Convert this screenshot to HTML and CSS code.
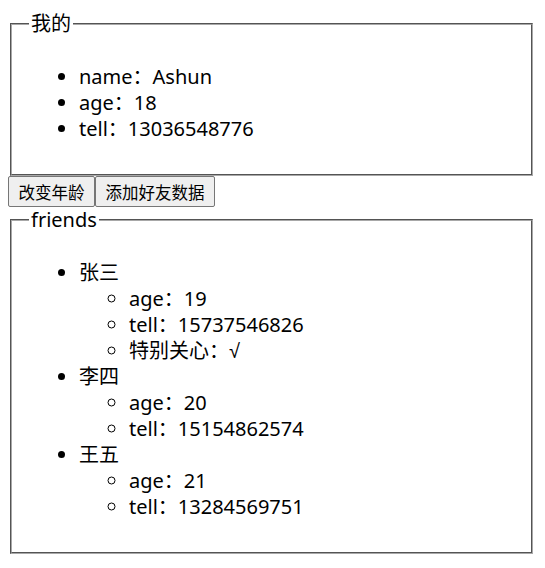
FILE: index.html
```html
<!DOCTYPE html>
<html>
<head>
<meta charset="utf-8">
<link rel="stylesheet" href="styles.css">
</head>
<body>
<fieldset class="box box-me">
  <legend class="box-title">我的</legend>
  <ul class="list">
    <li>name：Ashun</li>
    <li>age：18</li>
    <li>tell：13036548776</li>
  </ul>
</fieldset>
<div class="actions"><button class="btn">改变年龄</button><button class="btn">添加好友数据</button></div>
<fieldset class="box box-friends">
  <legend class="box-title">friends</legend>
  <ul class="list">
    <li>张三
      <ul class="sub">
        <li>age：19</li>
        <li>tell：15737546826</li>
        <li>特别关心：<span class="check">√</span></li>
      </ul>
    </li>
    <li>李四
      <ul class="sub">
        <li>age：20</li>
        <li>tell：15154862574</li>
      </ul>
    </li>
    <li>王五
      <ul class="sub">
        <li>age：21</li>
        <li>tell：13284569751</li>
      </ul>
    </li>
  </ul>
</fieldset>
</body>
</html>
```
FILE: styles.css
```css
html, body {
  background: #fff;
}
body {
  margin: 11px 10px 8px 8px;
  font-family: "Noto Sans", "Noto Sans CJK SC", sans-serif;
  font-size: 20px;
  line-height: 26px;
  color: #000;
}
.box {
  margin: 0 2px;
  padding: 7px 17px 12px 17px;
  border: 2px groove #a8a8a8;
}
.box-title {
  padding: 0 2px;
  line-height: 26px;
}
.list {
  margin: 20px 0;
  padding-left: 50px;
  list-style: disc;
}
.sub {
  margin: 0;
  padding-left: 50px;
  list-style: circle;
}
.check {
  font-family: "Liberation Sans", sans-serif;
}
.actions {
  display: flex;
}
.btn {
  font-family: "Noto Sans CJK SC", "Noto Sans", sans-serif;
  font-size: 16.5px;
  line-height: 22px;
  height: 31px;
  padding: 0 9.5px;
  background: #efefef;
  border: 1px solid #767676;
  border-radius: 2px;
  color: #000;
}
```
